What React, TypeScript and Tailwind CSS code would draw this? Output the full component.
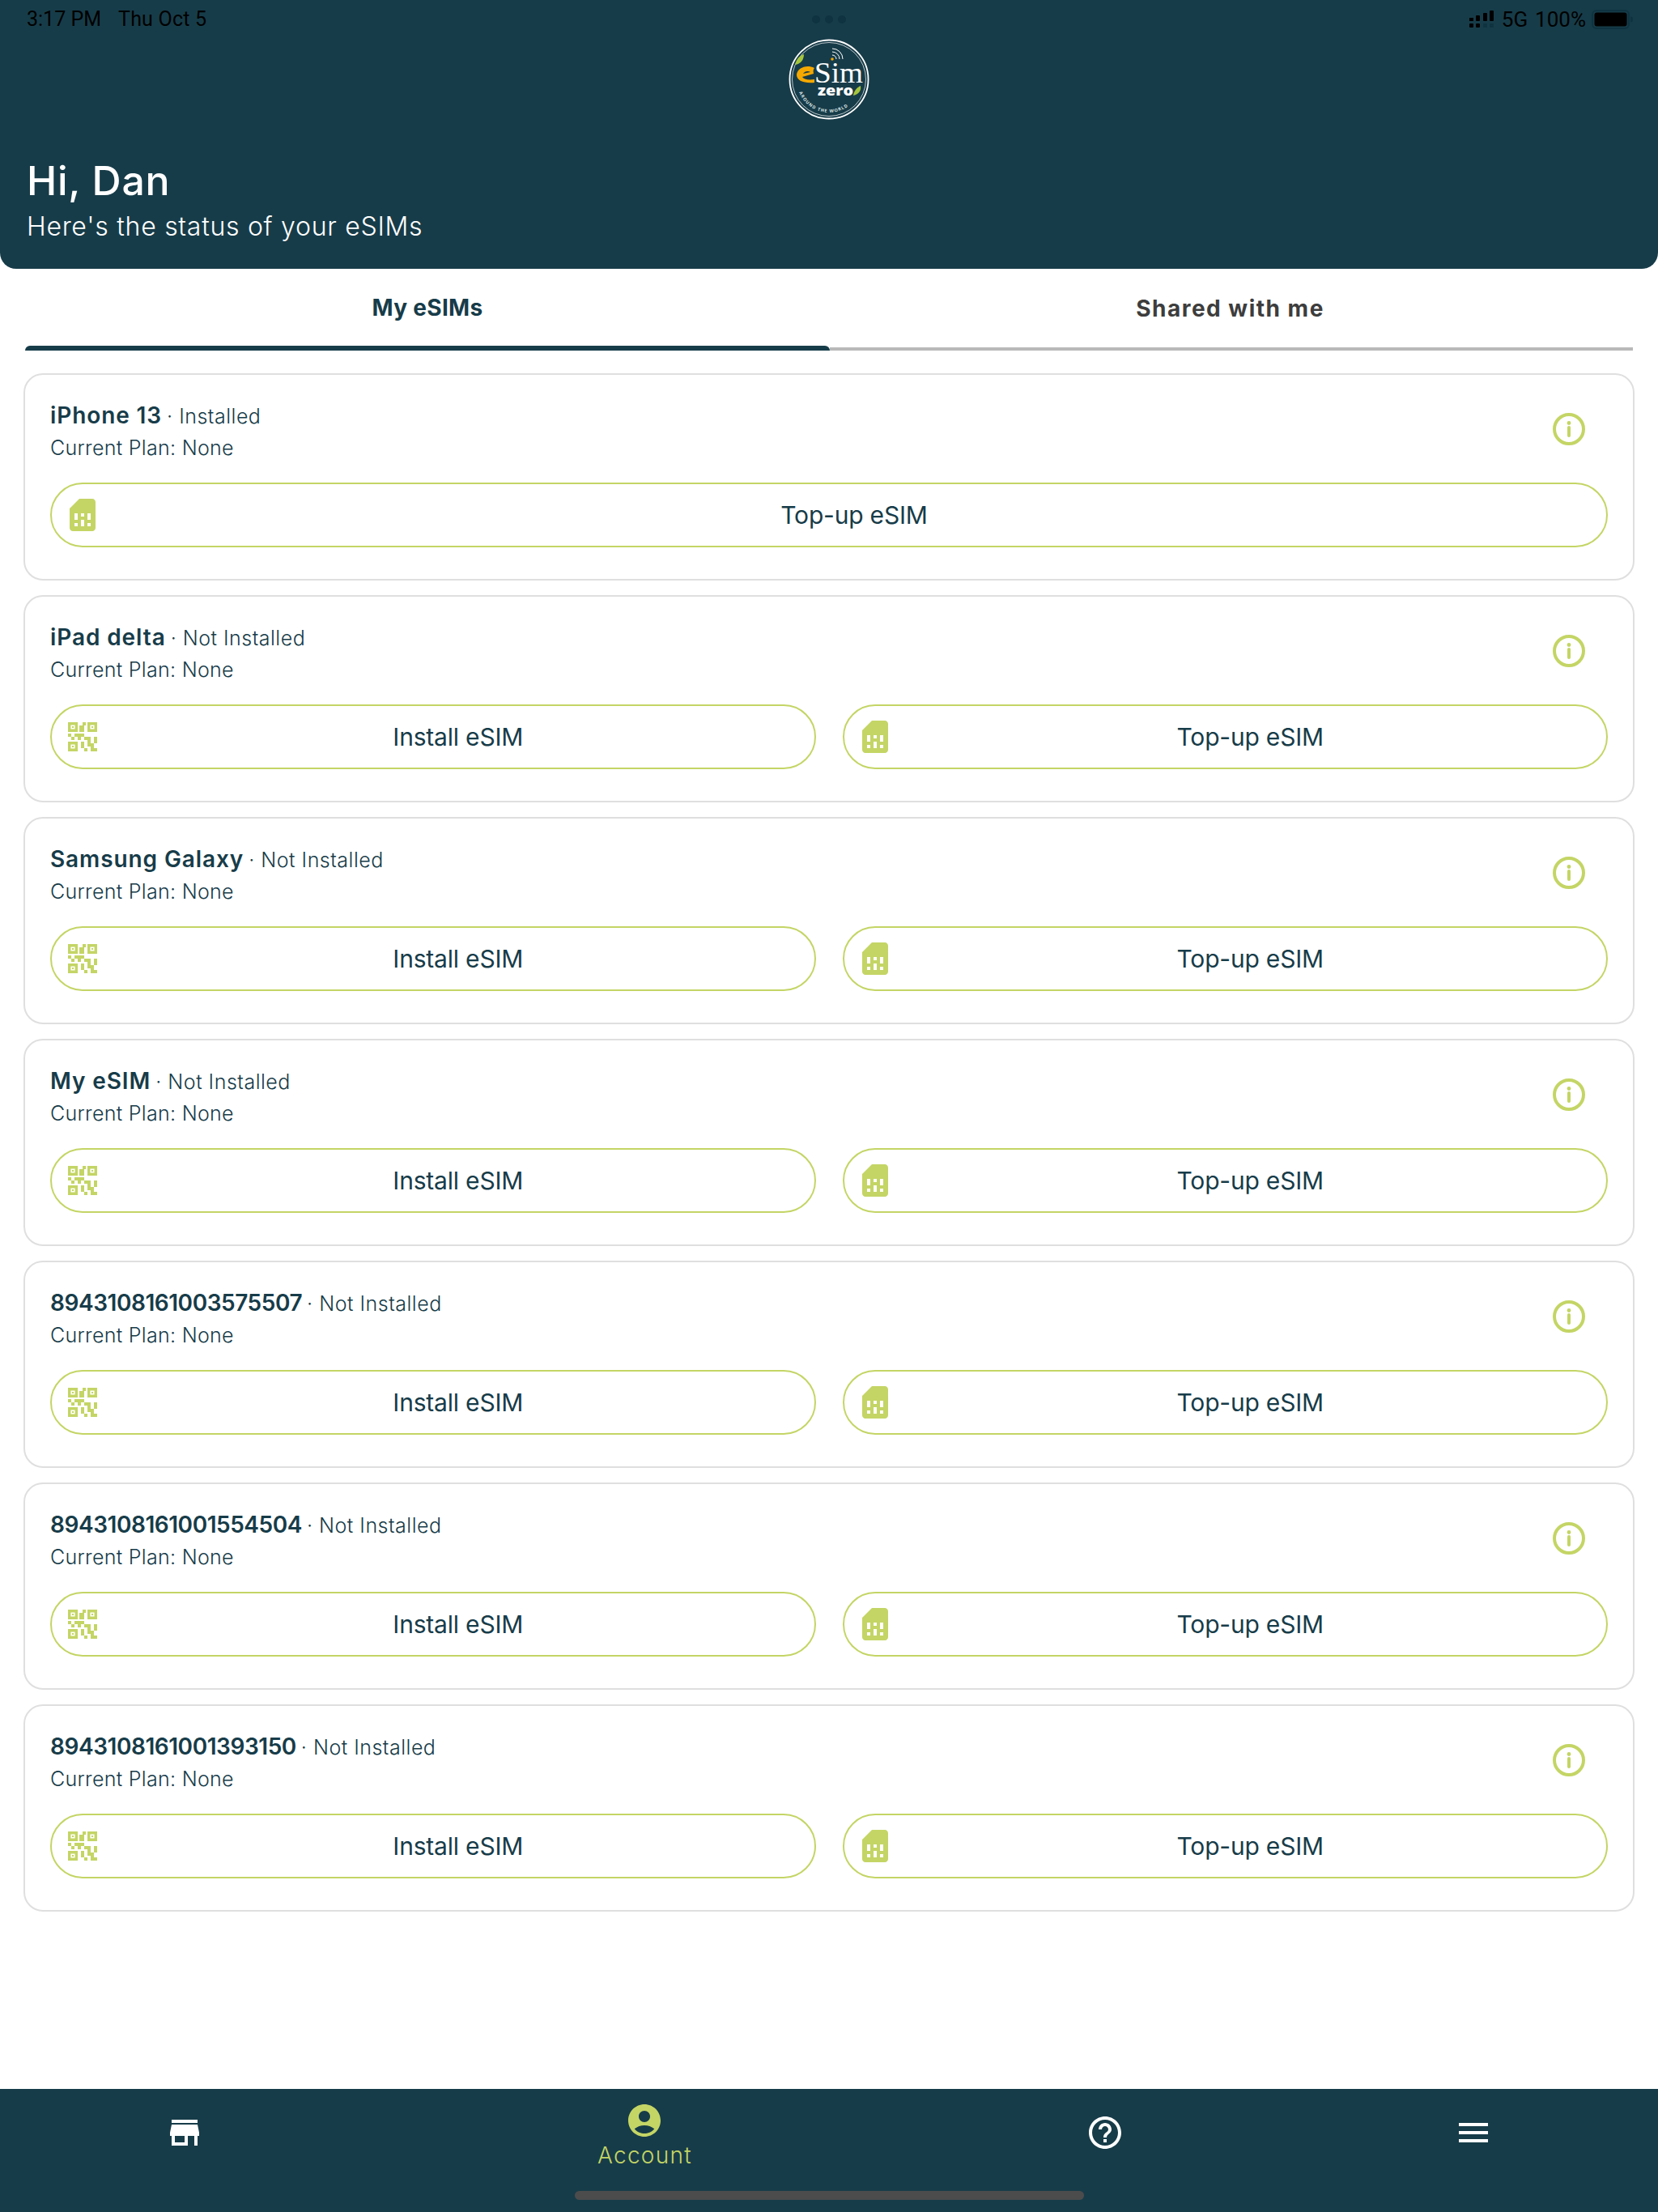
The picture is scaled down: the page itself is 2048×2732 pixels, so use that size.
import React from "react";
import { MdStore, MdAccountCircle, MdHelpOutline, MdMenu, MdSimCard } from "react-icons/md";

const FONT = "[font-family:Inter,'Noto_Sans',sans-serif]";

function Logo() {
  return (
    <svg width="100" height="100" viewBox="0 0 100 100" className="block">
      <circle cx="50" cy="50" r="48.5" fill="none" stroke="#fff" strokeWidth="1.8" />
      <circle cx="50" cy="50" r="45.5" fill="none" stroke="#fff" strokeWidth="0.7" />
      <path d="M32 36 C22 31 11 36 10 44 C10 52 19 55 32 54 L32 50 C24 51 19 50 17 47 L31 43 C30 39 31 37 32 36 Z" fill="#f5a800" />
      <path d="M18 43 C20 40 24 39 27 41 Z" fill="#173c49" />
      <text x="32" y="54" fill="#fff" fontFamily="'Liberation Serif',serif" fontSize="36" textLength="60" lengthAdjust="spacingAndGlyphs">Sim</text>
      <text x="36" y="70" fill="#fff" fontFamily="'Open Sans',sans-serif" fontWeight="800" fontSize="18" textLength="44" lengthAdjust="spacingAndGlyphs">zero</text>
      <circle cx="54" cy="25" r="1.8" fill="#f5a800" />
      <path d="M54 20 A5 5 0 0 1 59 25 M54 16 A9 9 0 0 1 63 25 M54 12 A13 13 0 0 1 67 25" fill="none" stroke="#fff" strokeWidth="1" />
      <path d="M8 32 C10 24 14 21 19 19 C19 26 15 31 8 32 Z" fill="#a6c53c" />
      <path d="M80 70 C81 63 85 60 89 58 C90 64 87 68 80 70 Z" fill="#a6c53c" />
      <defs>
        <path id="logoarc" d="M13 66 A40 40 0 0 0 82 75" />
      </defs>
      <text fill="#dfe5e6" fontFamily="'Open Sans',sans-serif" fontWeight="700" fontSize="5.4">
        <textPath href="#logoarc" textLength="72">AROUND THE WORLD</textPath>
      </text>
    </svg>
  );
}

function StatusBar() {
  return (
    <div className="relative flex h-[48px] items-center justify-between pl-[33px] pr-[30px] text-black [font-family:Roboto,sans-serif]">
      <div className="flex gap-[21px] text-[25px]">
        <span>3:17 PM</span>
        <span className="tracking-[0.2px]">Thu Oct 5</span>
      </div>
      <div className="absolute left-[1003px] top-[19px] flex gap-[6px]">
        <span className="h-[10px] w-[10px] rounded-full bg-[#0f3340]" />
        <span className="h-[10px] w-[10px] rounded-full bg-[#0f3340]" />
        <span className="h-[10px] w-[10px] rounded-full bg-[#0f3340]" />
      </div>
      <div className="flex items-center text-[26px]">
        <svg width="30" height="22" viewBox="0 0 30 22" className="mr-[10px]">
          <rect x="0" y="9" width="5" height="4" fill="#000" />
          <rect x="8" y="6" width="5" height="7" rx="1" fill="#000" />
          <rect x="17" y="3" width="5" height="10" rx="1" fill="#000" />
          <rect x="25" y="0" width="5" height="13" rx="1" fill="#000" />
          <rect x="0" y="16" width="5" height="5" rx="1" fill="#000" />
          <rect x="8" y="16" width="5" height="5" rx="1" fill="#000" />
          <rect x="17" y="16" width="5" height="5" rx="1" fill="#0f3340" />
          <rect x="25" y="16" width="5" height="5" rx="1" fill="#0f3340" />
        </svg>
        <span>5G</span>
        <span className="ml-[9px]">100%</span>
        <svg width="52" height="24" viewBox="0 0 52 24" className="ml-[7px]">
          <rect x="1" y="1" width="45" height="22" rx="5" fill="none" stroke="#0f3340" strokeWidth="2" />
          <rect x="3.5" y="3.5" width="40" height="17" rx="3" fill="#000" />
          <path d="M48 8 L51 10 V14 L48 16 Z" fill="#0f3340" />
        </svg>
      </div>
    </div>
  );
}

function Header() {
  return (
    <header className="h-[332px] shrink-0 rounded-b-[20px] bg-[#173c49]">
      <StatusBar />
      <div className="flex justify-center">
        <Logo />
      </div>
      <div className={`pl-[33px] pt-[46px] text-white ${FONT}`}>
        <div className="text-[50px] font-medium leading-[58px] tracking-[0.7px]">Hi, Dan</div>
        <div className="mt-[7px] text-[32px] font-light leading-[42px] tracking-[0.72px]">Here's the status of your eSIMs</div>
      </div>
    </header>
  );
}

function Tabs() {
  return (
    <div className={`mx-[31px] flex h-[101px] ${FONT}`}>
      <div className="flex h-full w-[994px] flex-col">
        <div className="flex flex-1 items-center justify-center pt-[1px] text-[28px] font-bold tracking-[0.3px] text-[#173c49]">My eSIMs</div>
        <div className="h-[6px] rounded-t-[6px] bg-[#173c49]" />
      </div>
      <div className="flex h-full flex-1 flex-col">
        <div className="flex flex-1 items-center justify-center pr-[3px] pt-[1px] text-[28px] font-bold tracking-[1.5px] text-[#3d3d3d]">Shared with me</div>
        <div className="h-[4px] bg-[#b9b9b9]" />
      </div>
    </div>
  );
}

function InfoIcon() {
  return (
    <svg width="40" height="40" viewBox="0 0 40 40" className="mb-[6px] mr-[28px] shrink-0" fill="none">
      <circle cx="20" cy="20" r="18" stroke="#c4d565" strokeWidth="4" />
      <circle cx="20" cy="12.5" r="2.4" fill="#c4d565" />
      <line x1="20" y1="18" x2="20" y2="28" stroke="#c4d565" strokeWidth="4" strokeLinecap="round" />
    </svg>
  );
}

function QrIcon() {
  const blocks = [
    [7, 2, 3, 4], [9, 0, 2, 2], [0, 7, 2, 2], [4, 7, 6, 2], [2, 9, 2, 2], [6, 9, 2, 2], [10, 9, 4, 2],
    [16, 9, 2, 4], [8, 12, 2, 4], [10, 16, 2, 2], [12, 13, 4, 2], [14, 15, 2, 1], [14, 16, 4, 2], [12, 9, 2, 4],
  ];
  const finders = [[0, 0], [12, 0], [0, 12]];
  return (
    <svg width="48" height="48" viewBox="-3 -3 24 24" className="shrink-0" fill="#c4d565">
      {finders.map(([x, y]) => (
        <g key={`${x}-${y}`}>
          <path d={`M${x} ${y}h6v6h-6z M${x + 1.7} ${y + 1.7}v2.6h2.6v-2.6z`} fillRule="evenodd" />
          <rect x={x + 2.5} y={y + 2.5} width="1" height="1" />
        </g>
      ))}
      {blocks.map(([x, y, w, h]) => (
        <rect key={`${x}-${y}`} x={x} y={y} width={w} height={h} />
      ))}
    </svg>
  );
}

function ActionButton({ kind }: { kind: "install" | "topup" }) {
  return (
    <button className="flex h-[80px] flex-1 items-center rounded-full border-2 border-[#c4d565] bg-white pl-[14px]">
      {kind === "install" ? <QrIcon /> : <MdSimCard size={48} color="#c4d565" className="shrink-0" />}
      <span className="flex-1 text-center text-[30px] font-normal tracking-[-0.2px] text-[#173c49]">
        {kind === "install" ? "Install eSIM" : "Top-up eSIM"}
      </span>
    </button>
  );
}

function Card({ name, status, actions, numeric }: { name: string; status: string; actions: ("install" | "topup")[]; numeric?: boolean }) {
  return (
    <div className={`h-[256px] rounded-[24px] border-2 border-[#dfdfdf] bg-white px-[31px] pt-[30px] ${FONT}`}>
      <div className="flex h-[80px] items-center justify-between">
        <div className="text-[#173c49]">
          <div className="flex h-[40px] items-baseline leading-[40px]">
            <span className={numeric ? "text-[28px] font-semibold tracking-[-0.45px]" : "text-[28px] font-semibold tracking-[0.9px]"}>{name}</span>
            <span className="ml-[6px] text-[25px] font-light tracking-[0.5px]">· {status}</span>
          </div>
          <div className="text-[25px] font-light leading-[40px] tracking-[0.3px]">Current Plan: None</div>
        </div>
        <InfoIcon />
      </div>
      <div className="mt-[23px] flex gap-[33px]">
        {actions.map((a) => (
          <ActionButton key={a} kind={a} />
        ))}
      </div>
    </div>
  );
}

const both: ("install" | "topup")[] = ["install", "topup"];
const rows = [
  { name: "iPad delta", numeric: false },
  { name: "Samsung Galaxy", numeric: false },
  { name: "My eSIM", numeric: false },
  { name: "8943108161003575507", numeric: true },
  { name: "8943108161001554504", numeric: true },
  { name: "8943108161001393150", numeric: true },
];

function BottomNav() {
  return (
    <nav className={`relative grid h-[152px] shrink-0 grid-cols-[2fr_3fr_2fr_2fr] bg-[#173c49] ${FONT}`}>
      <div className="flex justify-center pt-[30px]">
        <MdStore size={48} color="#fff" />
      </div>
      <div className="flex flex-col items-center pt-[15px]">
        <MdAccountCircle size={48} color="#c4d565" />
        <span className="mt-[2px] text-[28px] font-light leading-[34px] tracking-[1.3px] text-[#c4d565]">Account</span>
      </div>
      <div className="flex justify-center pt-[30px]">
        <MdHelpOutline size={48} color="#fff" />
      </div>
      <div className="flex justify-center pt-[30px]">
        <MdMenu size={48} color="#fff" />
      </div>
      <div className="absolute left-[710px] top-[126px] h-[11px] w-[629px] rounded-full bg-[#4c4c4c]" />
    </nav>
  );
}

export default function App() {
  return (
    <div className="flex h-[2732px] w-[2048px] flex-col overflow-hidden bg-white">
      <Header />
      <Tabs />
      <main className="flex flex-1 flex-col gap-[18px] px-[29px] pt-[28px]">
        <Card name="iPhone 13" status="Installed" actions={["topup"]} />
        {rows.map((r) => (
          <Card key={r.name} name={r.name} status="Not Installed" numeric={r.numeric} actions={both} />
        ))}
      </main>
      <BottomNav />
    </div>
  );
}
